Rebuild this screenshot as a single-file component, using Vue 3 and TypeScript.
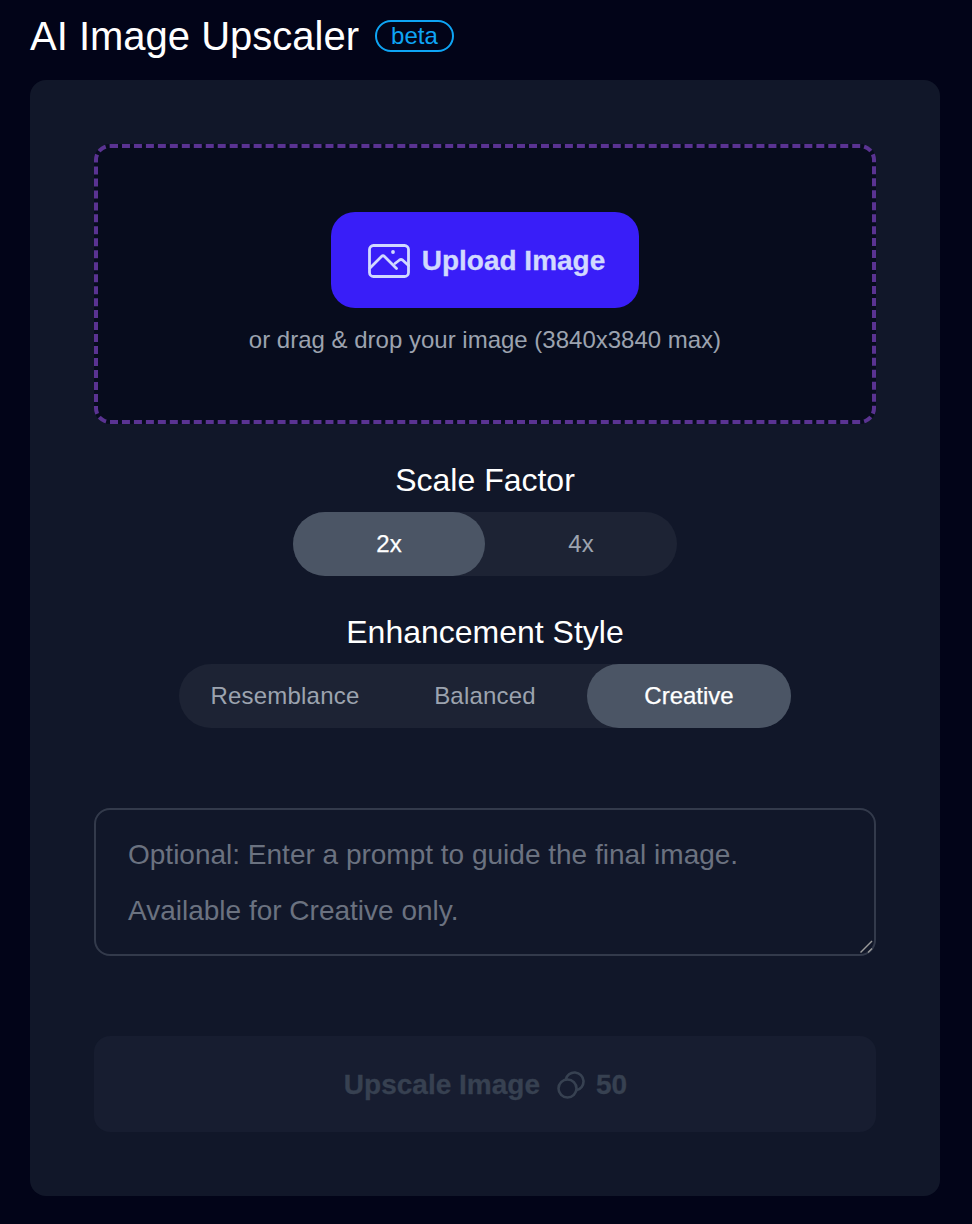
<script setup lang="ts">
const scales = ['2x', '4x']
const styles = ['Resemblance', 'Balanced', 'Creative']
const activeScale = '2x'
const activeStyle = 'Creative'
const prompt = 'Optional: Enter a prompt to guide the final image.\nAvailable for Creative only.'
</script>

<template>
  <div class="page">
    <header class="head">
      <h1 class="title">AI Image Upscaler</h1>
      <span class="beta">beta</span>
    </header>
    <main class="card">
      <section class="drop">
        <button class="upload" type="button">
          <svg class="img-icon" viewBox="0 0 42 34" fill="none" stroke="currentColor" stroke-width="2.8" stroke-linecap="round" stroke-linejoin="round">
            <rect x="1.5" y="1.5" width="39" height="31" rx="4" />
            <path d="M2 24 L13.5 12.5 Q15 11 16.5 12.5 L28.5 24.5" />
            <path d="M27 19.5 L31.5 16 Q33 15 34.5 16 L40.5 21.5" />
            <circle cx="25" cy="8" r="1.9" fill="currentColor" stroke="none" />
          </svg>
          <span class="strong">Upload Image</span>
        </button>
        <p class="hint">or drag &amp; drop your image (3840x3840 max)</p>
      </section>

      <h2 class="label first">Scale Factor</h2>
      <div class="segments">
        <div v-for="s in scales" :key="s" class="seg seg-scale" :class="{ on: s === activeScale }">{{ s }}</div>
      </div>

      <h2 class="label second">Enhancement Style</h2>
      <div class="segments">
        <div v-for="s in styles" :key="s" class="seg seg-style" :class="{ on: s === activeStyle }">{{ s }}</div>
      </div>

      <div class="prompt-wrap">
        <textarea class="prompt" :placeholder="prompt"></textarea>
        <svg class="grip" viewBox="0 0 14 14" fill="none" stroke="#9a9a9a" stroke-width="1.5">
          <path d="M0.5 12.5 L12 1" />
          <path d="M8 12.5 L12 8.5" />
        </svg>
      </div>

      <button class="go" type="button" disabled>
        <span class="strong">Upscale Image</span>
        <svg class="coin" viewBox="0 0 28 28" fill="none" stroke="currentColor" stroke-width="2.6">
          <circle cx="10.5" cy="17.5" r="9" />
          <path d="M8.7 8.7 A9 9 0 1 1 19.3 19.3" />
        </svg>
        <span class="strong">50</span>
      </button>
    </main>
  </div>
</template>

<style scoped>
.page {
  box-sizing: border-box;
  width: 972px;
  height: 1224px;
  padding: 0 32px 28px 30px;
  background: #020418;
  font-family: "Liberation Sans", Arial, sans-serif;
  color: #fff;
  overflow: hidden;
}
.head {
  height: 80px;
  box-sizing: border-box;
  padding-bottom: 8px;
  display: flex;
  align-items: center;
  gap: 16px;
}
.title {
  margin: 0;
  font-size: 40px;
  font-weight: 400;
  line-height: 44px;
}
.beta {
  box-sizing: border-box;
  height: 32px;
  padding: 0 14px;
  border: 2px solid #0ea5f5;
  border-radius: 16px;
  color: #0ea5f5;
  font-size: 24px;
  line-height: 28px;
}
.card {
  box-sizing: border-box;
  height: 1116px;
  padding: 64px;
  background: #111729;
  border-radius: 16px;
  display: flex;
  flex-direction: column;
  align-items: center;
}
.drop {
  box-sizing: border-box;
  width: 100%;
  height: 280px;
  padding-top: 64px;
  border: 4px dashed #5a3392;
  border-radius: 16px;
  background: #070c1d;
  display: flex;
  flex-direction: column;
  align-items: center;
}
.upload {
  box-sizing: border-box;
  width: 308px;
  height: 96px;
  padding: 2px 0 0 3px;
  border: 0;
  border-radius: 24px;
  background: #391ef8;
  color: #d1d9ff;
  display: flex;
  align-items: center;
  justify-content: center;
  gap: 12px;
  font: 700 28px "Liberation Sans", Arial, sans-serif;
}
.strong {
  -webkit-text-stroke: 0.3px currentColor;
}
.img-icon {
  width: 42px;
  height: 34px;
}
.hint {
  margin: 16px 0 0;
  color: #9ca3af;
  font-size: 24px;
  line-height: 32px;
}
.label {
  margin: 0;
  font-size: 32px;
  font-weight: 400;
  line-height: 40px;
}
.first {
  margin-top: 36px;
  margin-bottom: 12px;
}
.second {
  margin-top: 36px;
  margin-bottom: 12px;
}
.segments {
  display: flex;
  border-radius: 32px;
  background: #1d2334;
}
.seg {
  height: 64px;
  border-radius: 32px;
  display: flex;
  align-items: center;
  justify-content: center;
  color: #9ca3af;
  font-size: 24px;
}
.seg-scale {
  width: 192px;
}
.seg-style {
  width: 204px;
  letter-spacing: 0.2px;
}
.seg-style:nth-child(1) {
  width: 212px;
}
.seg-style:nth-child(2) {
  width: 188px;
  margin-right: 8px;
}
.seg.on {
  background: #4b5565;
  color: #fff;
  letter-spacing: 0;
  -webkit-text-stroke: 0.25px currentColor;
}
.prompt-wrap {
  position: relative;
  width: 100%;
  margin-top: 80px;
}
.prompt {
  box-sizing: border-box;
  display: block;
  width: 100%;
  height: 148px;
  padding: 17px 32px;
  border: 2px solid #333a4b;
  border-radius: 16px;
  background: transparent;
  color: #fff;
  font: 400 28px/56px "Liberation Sans", Arial, sans-serif;
  outline: none;
  resize: none;
}
.prompt::placeholder {
  color: #6b7280;
  opacity: 1;
}
.grip {
  position: absolute;
  right: 2px;
  bottom: 2px;
  width: 14px;
  height: 14px;
}
.go {
  box-sizing: border-box;
  width: 100%;
  height: 96px;
  margin-top: 80px;
  padding: 2px 0 0 1px;
  border: 0;
  border-radius: 16px;
  background: #171d30;
  color: #374151;
  display: flex;
  align-items: center;
  justify-content: center;
  font: 700 28px "Liberation Sans", Arial, sans-serif;
}
.coin {
  width: 28px;
  height: 28px;
  margin: 0 11px 0 17px;
}
</style>

<style>
html, body {
  margin: 0;
  background: #020418;
}
</style>
